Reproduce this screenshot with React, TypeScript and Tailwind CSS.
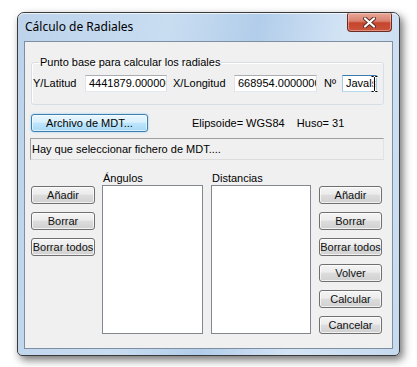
import React from "react";

const font = { fontFamily: '"Liberation Sans", Arial, sans-serif' };

function Btn({ children }: { children: React.ReactNode }) {
  return (
    <div className="h-[18px] w-full flex items-center justify-center rounded-[3px] border border-[#707070] bg-[linear-gradient(to_bottom,#f4f4f4_0%,#ececec_45%,#dddddd_50%,#d0d0d0_100%)] text-[11px] leading-[13px] text-[#111] shadow-[inset_0_0_0_1px_rgba(255,255,255,0.7)]">
      {children}
    </div>
  );
}

function Field({ text, w, focused, children }: { text: string; w: string; focused?: boolean; children?: React.ReactNode }) {
  return (
    <div
      className={
        "relative h-[17px] bg-white whitespace-nowrap flex items-center pl-[3px] text-[11px] leading-[13px] " +
        w +
        (focused
          ? " border border-t-[#3d7bad] border-l-[#a4c9e3] border-r-[#a4c9e3] border-b-[#b7d9ed]"
          : " border border-t-[#abadb3] border-l-[#e2e3ea] border-r-[#dbdfe6] border-b-[#e3e9ef]")
      }
    >
      <div className="overflow-hidden w-full">{text}</div>
      {children}
    </div>
  );
}

export default function App() {
  return (
    <div className="w-[417px] h-[367px] bg-white pl-[17px] pt-[12px]" style={font}>
      <div className="w-[383px] h-[344px] rounded-t-[7px] rounded-b-[5px] border border-[#3a3a3a] bg-[linear-gradient(100deg,#bcd3eb_0%,#c9ddf1_35%,#b2cdea_55%,#d4e4f5_75%,#c6daef_100%)] shadow-[3px_4px_9px_rgba(0,0,0,0.55)] flex flex-col">
        <div className="h-[28px] flex items-start justify-between shadow-[inset_0_1px_0_rgba(255,255,255,0.7)] rounded-t-[6px]">
          <div className="h-[28px] flex items-center pl-[7px] text-[12px] text-black" style={{ fontFamily: '"Noto Sans", "Open Sans", sans-serif' }}>
            Cálculo de Radiales
          </div>
          <div className="mr-[7px] w-[45px] h-[19px] rounded-b-[4px] rounded-t-[2px] border border-[#6d2a20] border-t-0 bg-[linear-gradient(to_bottom,#e9a999_0%,#d9826f_45%,#c7452e_55%,#c9533a_100%)] flex items-center justify-center shadow-[inset_0_0_0_1px_rgba(255,220,210,0.45)]">
            <svg width="13" height="11" viewBox="0 0 13 11">
              <path d="M2 1.5 L11 9.5 M11 1.5 L2 9.5" stroke="#5a2a22" strokeWidth="4" strokeLinecap="round" />
              <path d="M2 1.5 L11 9.5 M11 1.5 L2 9.5" stroke="#ffffff" strokeWidth="2.2" strokeLinecap="round" />
            </svg>
          </div>
        </div>

        <div className="mx-[6px] mb-[6px] flex-1 bg-[#f0f0f0] border border-[#7e8fa3] flex flex-col text-[11px] leading-[13px] text-black">
          {/* group box */}
          <fieldset className="mt-[14px] ml-[6px] w-[353px] h-[49px] border border-[#d5dfe5] rounded-[3px] shadow-[inset_1px_1px_0_#fff] pl-[1px]">
            <legend className="ml-[6px] px-[1px] leading-[13px]">Punto base para calcular los radiales</legend>
            <div className="flex items-center mt-[6px]">
              <div className="w-[52px]">Y/Latitud</div>
              <Field text="4441879.000000" w="w-[82px]" />
              <div className="w-[67px] pl-[6px]">X/Longitud</div>
              <Field text="668954.0000000" w="w-[83px]" />
              <div className="w-[25px] pl-[7px]">Nº</div>
              <Field text="Javals" w="w-[35px]" focused>
                <svg className="absolute left-[28px] top-[0px]" width="7" height="16" viewBox="0 0 7 16">
                  <path d="M0.5 0.5 H2.5 L3.5 1.5 L4.5 0.5 H6.5 M3.5 1.5 V14.5 M0.5 15.5 H2.5 L3.5 14.5 L4.5 15.5 H6.5" stroke="#ffffff" strokeWidth="2.5" fill="none" />
                  <path d="M0.5 0.5 H2.5 L3.5 1.5 L4.5 0.5 H6.5 M3.5 1.5 V14.5 M0.5 15.5 H2.5 L3.5 14.5 L4.5 15.5 H6.5" stroke="#000000" strokeWidth="1" fill="none" />
                </svg>
              </Field>
            </div>
          </fieldset>

          {/* Archivo row */}
          <div className="mt-[9px] ml-[6px] flex items-center">
            <div className="w-[117px] h-[18px] flex items-center justify-center rounded-[3px] border border-[#3c7fb1] bg-[linear-gradient(to_bottom,#eaf6fd_0%,#d9f0fc_45%,#bee6fd_50%,#a7d9f5_100%)] shadow-[inset_0_0_0_1px_rgba(255,255,255,0.6),0_0_2px_#7ec3ee]">
              Archivo de MDT...
            </div>
            <div className="ml-[44px] whitespace-pre">Elipsoide= WGS84    Huso= 31</div>
          </div>

          {/* status */}
          <div className="mt-[6px] ml-[5px] w-[354px] h-[22px] border border-t-[#a0a0a0] border-l-[#a0a0a0] border-r-[#e3e3e3] border-b-[#dcdcdc] flex items-center pl-[1px]">
            Hay que seleccionar fichero de MDT....
          </div>

          {/* lists area */}
          <div className="mt-[12px] ml-[6px] flex items-start">
            <div className="w-[64px] mt-[14px] flex flex-col gap-[8px]">
              <Btn>Añadir</Btn>
              <Btn>Borrar</Btn>
              <Btn>Borrar todos</Btn>
            </div>
            <div className="ml-[7px] w-[101px] flex flex-col">
              <div className="h-[13px] pl-[1px]">Ángulos</div>
              <div className="h-[149px] bg-white border border-[#828790]" />
            </div>
            <div className="ml-[8px] w-[100px] flex flex-col">
              <div className="h-[13px] pl-[1px]">Distancias</div>
              <div className="h-[149px] bg-white border border-[#828790]" />
            </div>
            <div className="ml-[8px] w-[63px] mt-[14px] flex flex-col gap-[8px]">
              <Btn>Añadir</Btn>
              <Btn>Borrar</Btn>
              <Btn>Borrar todos</Btn>
              <Btn>Volver</Btn>
              <Btn>Calcular</Btn>
              <Btn>Cancelar</Btn>
            </div>
          </div>
        </div>
      </div>
    </div>
  );
}
